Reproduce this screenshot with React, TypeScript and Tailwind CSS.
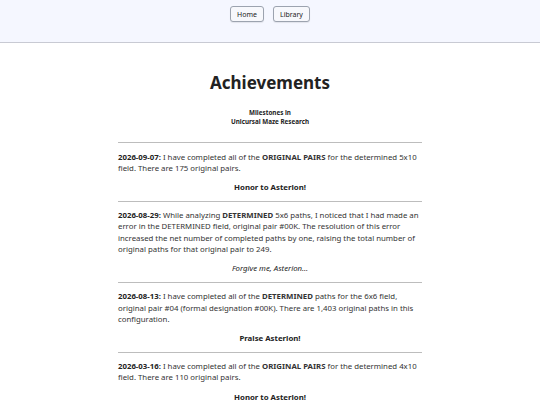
import React from "react";

interface Entry {
  date: string;
  body: React.ReactNode;
  closing: string;
  italic?: boolean;
}

const entries: Entry[] = [
  {
    date: "2026-09-07:",
    body: (
      <>
        I have completed all of the <b>ORIGINAL PAIRS</b> for the determined 5x10 field. There are 175
        original pairs.
      </>
    ),
    closing: "Honor to Asterion!",
  },
  {
    date: "2026-08-29:",
    body: (
      <>
        While analyzing <b>DETERMINED</b> 5x6 paths, I noticed that I had made an error in the
        DETERMINED field, original pair #00K. The resolution of this error increased the net number of
        completed paths by one, raising the total number of original paths for that original pair to
        249.
      </>
    ),
    closing: "Forgive me, Asterion...",
    italic: true,
  },
  {
    date: "2026-08-13:",
    body: (
      <>
        I have completed all of the <b>DETERMINED</b> paths for the 6x6 field, original pair #04 (formal
        designation #00K). There are 1,403 original paths in this configuration.
      </>
    ),
    closing: "Praise Asterion!",
  },
  {
    date: "2026-03-16:",
    body: (
      <>
        I have completed all of the <b>ORIGINAL PAIRS</b> for the determined 4x10 field. There are 110
        original pairs.
      </>
    ),
    closing: "Honor to Asterion!",
  },
];

const NavButton = ({ label }: { label: string }) => (
  <button className="h-[16px] px-[6px] rounded-[3px] border border-[#9ca3af] bg-[#f7f8fc] text-[7px] text-[#222] leading-none shadow-[0_1px_1px_rgba(0,0,0,0.08)]">
    {label}
  </button>
);

export default function App() {
  return (
    <div className="min-h-[405px] bg-white text-[#222] font-['Noto_Sans',sans-serif]">
      <header className="h-[43px] bg-[#f5f7ff] border-b border-[#c8cad3] flex justify-center pt-[6px] gap-[9px]">
        <NavButton label="Home" />
        <NavButton label="Library" />
      </header>

      <main className="w-[304px] mx-auto">
        <h1 className="text-[17px] font-bold text-center mt-[28px] leading-[24px] text-[#222]">
          Achievements
        </h1>
        <p className="text-[6.3px] font-bold text-center mt-[12.5px] leading-[9.5px]">
          Milestones in
          <br />
          Unicursal Maze Research
        </p>

        <div className="mt-[15.5px]">
          {entries.map((e, i) => (
            <section
              key={e.date}
              className={`border-t border-[#bdbdbd] pt-[8.5px] ${i > 0 ? "mt-[7.5px]" : ""}`}
            >
              <p className="text-[7.8px] leading-[11.3px] text-[#333]">
                <b className="text-[#222]">{e.date}</b> {e.body}
              </p>
              <p
                className={`text-[7.8px] text-center mt-[8px] leading-[11px] ${
                  e.italic ? "italic" : "font-bold"
                }`}
              >
                {e.closing}
              </p>
            </section>
          ))}
        </div>
      </main>
    </div>
  );
}
